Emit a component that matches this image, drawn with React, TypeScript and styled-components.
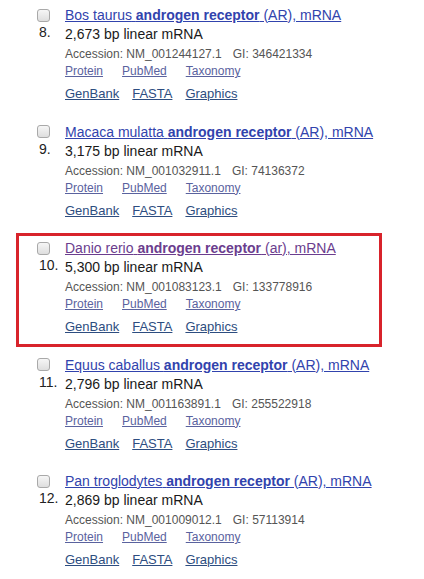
import React from "react";
import styled, { createGlobalStyle } from "styled-components";

const Global = createGlobalStyle`
  html, body { margin: 0; padding: 0; background: #ffffff; }
  body { font-family: "Liberation Sans", Arial, sans-serif; color: #222; }
`;

const List = styled.div`
  display: flex;
  flex-direction: column;
  padding-left: 16px;
  width: 366px;
`;

const Result = styled.div<{ $highlight?: boolean }>`
  display: grid;
  grid-template-columns: 28px 1fr;
  grid-template-rows: 18px auto;
  border: 3px solid ${(p) => (p.$highlight ? "#d8232b" : "transparent")};
  padding: 3px 0 8px 18px;
  margin-bottom: 2.5px;
`;

const Check = styled.span`
  width: 13px;
  height: 13px;
  box-sizing: border-box;
  align-self: center;
  border: 1px solid #a9a9a9;
  border-radius: 3px;
  background: linear-gradient(#f6f6f6, #dedede);
`;

const Num = styled.div`
  grid-column: 1;
  grid-row: 2;
  font-size: 14px;
  line-height: 18px;
  color: #222;
  padding-left: 2px;
  margin-top: -1px;
`;

const Body = styled.div`
  grid-column: 2;
  grid-row: 2;
  display: flex;
  flex-direction: column;
`;

const Title = styled.a<{ $visited?: boolean }>`
  grid-column: 2;
  grid-row: 1;
  font-size: 14px;
  line-height: 18px;
  white-space: nowrap;
  color: ${(p) => (p.$visited ? "#6b3d8e" : "#3143ad")};
  text-decoration: underline;
  cursor: pointer;
  b { font-weight: bold; }
`;

const Desc = styled.div`
  font-size: 14px;
  line-height: 18px;
  margin-top: 1px;
  color: #1a1a1a;
`;

const Meta = styled.div`
  display: flex;
  gap: 11px;
  font-size: 12px;
  line-height: 16px;
  margin-top: 3px;
  color: #555;
`;

const LinkRow = styled.div<{ $big?: boolean }>`
  display: flex;
  gap: ${(p) => (p.$big ? "13px" : "19px")};
  font-size: ${(p) => (p.$big ? "13px" : "12px")};
  line-height: ${(p) => (p.$big ? "18px" : "16px")};
  margin-top: ${(p) => (p.$big ? "6px" : "1px")};
`;

const SmallLink = styled.a`
  color: #5a629e;
  text-decoration: underline;
  cursor: pointer;
`;

const BigLink = styled.a`
  color: #2d4d80;
  text-decoration: underline;
  cursor: pointer;
`;

type Item = {
  n: number;
  species: string;
  gene: string;
  bp: string;
  acc: string;
  gi: string;
  highlight?: boolean;
};

const items: Item[] = [
  { n: 8, species: "Bos taurus", gene: "AR", bp: "2,673", acc: "NM_001244127.1", gi: "346421334" },
  { n: 9, species: "Macaca mulatta", gene: "AR", bp: "3,175", acc: "NM_001032911.1", gi: "74136372" },
  { n: 10, species: "Danio rerio", gene: "ar", bp: "5,300", acc: "NM_001083123.1", gi: "133778916", highlight: true },
  { n: 11, species: "Equus caballus", gene: "AR", bp: "2,796", acc: "NM_001163891.1", gi: "255522918" },
  { n: 12, species: "Pan troglodytes", gene: "AR", bp: "2,869", acc: "NM_001009012.1", gi: "57113914" },
];

export default function App() {
  return (
    <>
      <Global />
      <List>
        {items.map((it) => (
          <Result key={it.n} $highlight={it.highlight}>
            <Check />
            <Title $visited={it.highlight}>
              {it.species} <b>androgen receptor</b> ({it.gene}), mRNA
            </Title>
            <Num>{it.n}.</Num>
            <Body>
              <Desc>{it.bp} bp linear mRNA</Desc>
              <Meta>
                <span>Accession: {it.acc}</span>
                <span>GI: {it.gi}</span>
              </Meta>
              <LinkRow>
                <SmallLink>Protein</SmallLink>
                <SmallLink>PubMed</SmallLink>
                <SmallLink>Taxonomy</SmallLink>
              </LinkRow>
              <LinkRow $big>
                <BigLink>GenBank</BigLink>
                <BigLink>FASTA</BigLink>
                <BigLink>Graphics</BigLink>
              </LinkRow>
            </Body>
          </Result>
        ))}
      </List>
    </>
  );
}
